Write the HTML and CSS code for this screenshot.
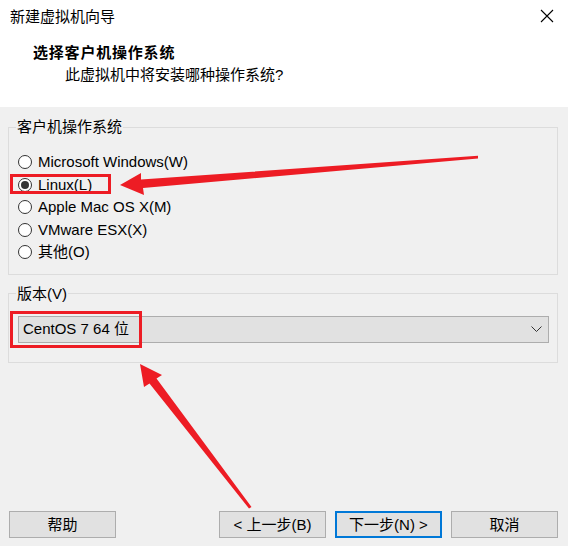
FILE: index.html
```html
<!DOCTYPE html>
<html lang="zh-CN">
<head>
<meta charset="utf-8">
<title>新建虚拟机向导</title>
<link rel="stylesheet" href="styles.css">
</head>
<body>
<div class="window">
  <div class="header">
    <div class="titlebar">
      <span class="title">新建虚拟机向导</span>
      <svg class="close" width="14" height="14" viewBox="0 0 14 14"><path d="M1 1L13 13M13 1L1 13" stroke="#000" stroke-width="1.1" fill="none"/></svg>
    </div>
    <div class="heading">选择客户机操作系统</div>
    <div class="subheading">此虚拟机中将安装哪种操作系统?</div>
  </div>
  <div class="content">
    <fieldset class="group os-group">
      <legend>客户机操作系统</legend>
      <div class="radio"><span class="circle"></span>Microsoft Windows(W)</div>
      <div class="radio"><span class="circle checked"></span>Linux(L)</div>
      <div class="radio"><span class="circle"></span>Apple Mac OS X(M)</div>
      <div class="radio"><span class="circle"></span>VMware ESX(X)</div>
      <div class="radio"><span class="circle"></span>其他(O)</div>
    </fieldset>
    <fieldset class="group version-group">
      <legend>版本(V)</legend>
      <div class="select">
        <span>CentOS 7 64 位</span>
        <svg class="chevron" width="11" height="7" viewBox="0 0 11 7"><path d="M0.5 0.5L5.5 5.5L10.5 0.5" stroke="#333" stroke-width="1" fill="none"/></svg>
      </div>
    </fieldset>
    <div class="footer">
      <button class="btn">帮助</button>
      <div class="nav">
        <button class="btn">&lt; 上一步(B)</button>
        <button class="btn primary">下一步(N) &gt;</button>
        <button class="btn">取消</button>
      </div>
    </div>
  </div>
  <svg class="annotations" width="568" height="546" viewBox="0 0 568 546">
    <rect x="11.5" y="175.5" width="98" height="17" fill="none" stroke="#ed1c24" stroke-width="3"/>
    <rect x="11.5" y="312.5" width="129" height="34" fill="none" stroke="#ed1c24" stroke-width="3"/>
    <polygon points="120,185 141,173 141,179.5 478,155.8 478,158.6 143,188 144,195" fill="#ed1c24"/>
    <polygon points="140,364 162,375 156.5,378.5 251.5,507 249,508.5 149.5,383.5 144,387" fill="#ed1c24"/>
  </svg>
</div>
</body>
</html>
```
FILE: styles.css
```css
* { box-sizing: border-box; }
html, body { margin: 0; padding: 0; }
body {
  font-family: "Liberation Sans", "Noto Sans CJK SC", sans-serif;
  font-size: 15px;
  color: #000;
  background: #f0f0f0;
}
.window {
  position: relative;
  width: 568px;
  height: 546px;
  display: flex;
  flex-direction: column;
  background: #f0f0f0;
  overflow: hidden;
}
.header {
  background: #fff;
  height: 107px;
  flex: none;
}
.titlebar {
  height: 32px;
  display: flex;
  align-items: center;
  justify-content: space-between;
  padding: 0 14px 0 10px;
}
.title { line-height: 20px; padding-top: 1px; }
.close { display: block; }
.heading {
  margin-top: 11px;
  padding-left: 33px;
  line-height: 20px;
  font-weight: bold;
  letter-spacing: 0.8px;
}
.subheading {
  margin-top: 2px;
  padding-left: 65px;
  line-height: 20px;
}
.content {
  flex: 1;
  display: flex;
  flex-direction: column;
  padding: 10px 10px 8px 8px;
}
.group {
  margin: 0;
  border: 1px solid #dcdcdc;
  min-width: 0;
}
.group legend {
  margin-left: -2px;
  padding: 0 1px;
  line-height: 20px;
}
.os-group {
  padding: 14px 0 10px 9px;
}
.radio {
  height: 22.5px;
  display: flex;
  align-items: center;
  gap: 6px;
  line-height: 20px;
}
.circle {
  width: 14px;
  height: 14px;
  border-radius: 50%;
  border: 1px solid #333;
  background: #fff;
  display: flex;
  align-items: center;
  justify-content: center;
  flex: none;
}
.circle.checked::after {
  content: "";
  width: 8px;
  height: 8px;
  border-radius: 50%;
  background: #333;
}
.version-group {
  margin-top: 9px;
  padding: 12px 8px 19px 9px;
}
.select {
  height: 27px;
  border: 1px solid #adadad;
  background: #e1e1e1;
  display: flex;
  align-items: center;
  justify-content: space-between;
  padding: 0 6px 0 4px;
  line-height: 20px;
}
.chevron { display: block; }
.footer {
  margin-top: auto;
  display: flex;
  justify-content: space-between;
  padding-left: 1px;
}
.nav {
  display: flex;
  gap: 9px;
}
.btn {
  width: 107px;
  height: 27px;
  border: 1px solid #adadad;
  background: #e1e1e1;
  font: inherit;
  color: #000;
  padding: 0;
  line-height: 20px;
}
.btn.primary {
  border: 2px solid #0078d7;
}
.annotations {
  position: absolute;
  left: 0;
  top: 0;
  pointer-events: none;
}
```
